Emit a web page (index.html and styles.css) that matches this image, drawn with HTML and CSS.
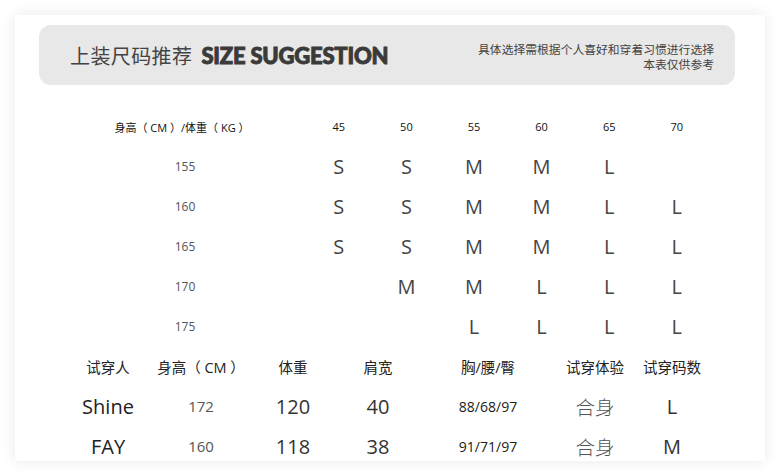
FILE: index.html
```html
<!DOCTYPE html>
<html lang="zh-CN">
<head>
<meta charset="utf-8">
<title>上装尺码推荐</title>
<link rel="stylesheet" href="styles.css">
</head>
<body>
<div class="card">
  <div class="banner">
    <div class="banner-title">
      <span class="title-cn">上装尺码推荐</span>
      <span class="title-en">SIZE SUGGESTION</span>
    </div>
    <div class="banner-note">
      <div>具体选择需根据个人喜好和穿着习惯进行选择</div>
      <div>本表仅供参考</div>
    </div>
  </div>

  <div class="size-grid">
    <div class="hd hd-label">身高（ CM ）/体重（ KG ）</div>
    <div class="spacer"></div>
    <div class="hd">45</div><div class="hd">50</div><div class="hd">55</div><div class="hd">60</div><div class="hd">65</div><div class="hd">70</div>

    <div class="ht">155</div><div class="spacer"></div>
    <div class="sz">S</div><div class="sz">S</div><div class="sz">M</div><div class="sz">M</div><div class="sz">L</div><div class="sz"></div>

    <div class="ht">160</div><div class="spacer"></div>
    <div class="sz">S</div><div class="sz">S</div><div class="sz">M</div><div class="sz">M</div><div class="sz">L</div><div class="sz">L</div>

    <div class="ht">165</div><div class="spacer"></div>
    <div class="sz">S</div><div class="sz">S</div><div class="sz">M</div><div class="sz">M</div><div class="sz">L</div><div class="sz">L</div>

    <div class="ht">170</div><div class="spacer"></div>
    <div class="sz"></div><div class="sz">M</div><div class="sz">M</div><div class="sz">L</div><div class="sz">L</div><div class="sz">L</div>

    <div class="ht">175</div><div class="spacer"></div>
    <div class="sz"></div><div class="sz"></div><div class="sz">L</div><div class="sz">L</div><div class="sz">L</div><div class="sz">L</div>
  </div>

  <div class="model-grid">
    <div class="mh">试穿人</div>
    <div class="mh">身高（ CM ）</div>
    <div class="mh">体重</div>
    <div class="mh">肩宽</div>
    <div class="mh">胸/腰/臀</div>
    <div class="mh">试穿体验</div>
    <div class="mh">试穿码数</div>

    <div class="big name">Shine</div>
    <div class="mid">172</div>
    <div class="big">120</div>
    <div class="big">40</div>
    <div class="meas">88/68/97</div>
    <div class="fit">合身</div>
    <div class="big">L</div>

    <div class="big name">FAY</div>
    <div class="mid">160</div>
    <div class="big">118</div>
    <div class="big">38</div>
    <div class="meas">91/71/97</div>
    <div class="fit">合身</div>
    <div class="big">M</div>
  </div>
</div>
</body>
</html>
```

FILE: styles.css
```css
html, body {
  margin: 0;
  padding: 0;
  background: #ffffff;
}

body {
  font-family: "Open Sans", "Noto Sans CJK SC", sans-serif;
  color: #333;
  width: 780px;
  height: 476px;
  overflow: hidden;
  padding-top: 15px;
  box-sizing: border-box;
}

.card {
  margin-left: 15px;
  width: 750px;
  height: 446px;
  background: #fff;
  box-shadow: 0 0 14px rgba(0, 0, 0, 0.09);
  padding-top: 10px;
  box-sizing: border-box;
  overflow: hidden;
}

.banner {
  margin-left: 24px;
  width: 696px;
  height: 60px;
  background: #e8e8e8;
  border-radius: 12px;
  display: flex;
  align-items: center;
  justify-content: space-between;
  padding: 0 21px 0 31px;
  box-sizing: border-box;
}

.banner-title {
  display: flex;
  align-items: center;
  gap: 9px;
  margin-top: 1px;
}

.title-cn {
  font-family: "Noto Sans CJK SC", sans-serif;
  font-size: 20px;
  color: #444;
  letter-spacing: 0.4px;
}

.title-en {
  font-family: "Lato", sans-serif;
  font-weight: 900;
  font-size: 22px;
  color: #3a3a3a;
  letter-spacing: -0.2px;
  -webkit-text-stroke: 0.9px #3a3a3a;
}

.banner-note {
  font-family: "Noto Sans CJK SC", sans-serif;
  font-size: 11.8px;
  line-height: 15px;
  color: #444;
  text-align: right;
  margin-top: 2px;
}

.size-grid {
  margin-top: 22px;
  margin-left: 100px;
  display: grid;
  grid-template-columns: 140px 50px repeat(6, 67.6px);
  grid-template-rows: 39px repeat(5, 40px);
}

.size-grid > div {
  display: flex;
  align-items: center;
  justify-content: center;
}

.hd {
  font-size: 11px;
  color: #111;
}

.hd-label {
  font-family: "Open Sans", "Noto Sans CJK SC", sans-serif;
  font-size: 11px;
  white-space: pre;
  margin-left: -6px;
}

.ht {
  font-size: 12px;
  color: #555;
}

.sz {
  font-size: 20px;
  color: #444;
}

.model-grid {
  margin-left: 53px;
  display: grid;
  grid-template-columns: 80px 106px 78px 92px 128px 86px 68px;
  grid-auto-rows: 40px;
}

.model-grid > div {
  display: flex;
  align-items: center;
  justify-content: center;
  white-space: pre;
}

.mh {
  font-family: "Open Sans", "Noto Sans CJK SC", sans-serif;
  font-size: 14.5px;
  color: #222;
}

.big {
  font-size: 20px;
  color: #333;
}

.name {
  color: #222;
}

.mid {
  font-size: 15px;
  color: #555;
}

.meas {
  font-size: 14px;
  color: #222;
}

.fit {
  font-family: "Noto Sans CJK SC", sans-serif;
  font-size: 19.5px;
  font-weight: 300;
  color: #555;
}
```
